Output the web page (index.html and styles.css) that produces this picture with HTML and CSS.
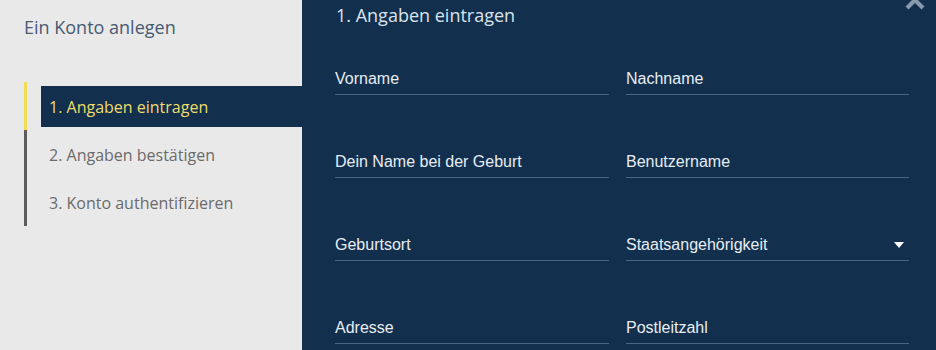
FILE: index.html
```html
<!DOCTYPE html>
<html lang="de">
<head>
<meta charset="UTF-8">
<title>Ein Konto anlegen</title>
<link rel="stylesheet" href="styles.css">
</head>
<body>
<div class="page">
  <aside class="sidebar">
    <h2 class="sidebar-title">Ein Konto anlegen</h2>
    <ul class="steps">
      <li class="step active"><span>1. Angaben eintragen</span></li>
      <li class="step"><span>2. Angaben bestätigen</span></li>
      <li class="step"><span>3. Konto authentifizieren</span></li>
    </ul>
  </aside>
  <main class="content">
    <button class="close" aria-label="Schließen">
      <svg width="24" height="24" viewBox="0 0 24 24"><path d="M4 4 L20 20 M20 4 L4 20" stroke="#8799ad" stroke-width="4.2" fill="none"/></svg>
    </button>
    <h1 class="content-title">1. Angaben eintragen</h1>
    <div class="fields">
      <div class="field"><span>Vorname</span></div>
      <div class="field"><span>Nachname</span></div>
      <div class="field"><span>Dein Name bei der Geburt</span></div>
      <div class="field"><span>Benutzername</span></div>
      <div class="field"><span>Geburtsort</span></div>
      <div class="field select"><span>Staatsangehörigkeit</span><i class="caret"></i></div>
      <div class="field"><span>Adresse</span></div>
      <div class="field"><span>Postleitzahl</span></div>
    </div>
  </main>
</div>
</body>
</html>
```

FILE: styles.css
```css
body {
    margin: 0;
    background-color: #12304e;
    font-family: 'Open Sans', sans-serif;
}
.page {
    display: flex;
    height: 350px;
    overflow: hidden;
}
.sidebar {
    width: 302px;
    flex: none;
    background-color: #e9e9e9;
    padding-left: 24px;
    box-sizing: border-box;
}
.sidebar-title {
    margin: 15px 0 0;
    font-size: 18px;
    font-weight: 400;
    line-height: 24px;
    color: #475a72;
}
.steps {
    list-style: none;
    margin: 43px 0 0;
    padding: 0;
}
.step {
    border-left: 3px solid #5c5c5c;
    padding: 4px 0 3px 14px;
}
.step span {
    display: flex;
    align-items: center;
    height: 41px;
    padding-left: 8px;
    font-size: 16px;
    color: #6b6b6b;
}
.step.active {
    border-left-color: #f2dc50;
}
.step.active span {
    background-color: #12304e;
    color: #f0dc6a;
}
.content {
    flex: 1;
    position: relative;
    padding: 3px 27px 0 33px;
}
.close {
    position: absolute;
    top: -12px;
    right: 9px;
    padding: 0;
    border: none;
    background: none;
    width: 24px;
    height: 24px;
}
.content-title {
    margin: 0 0 0 1px;
    font-size: 18px;
    font-weight: 400;
    line-height: 24px;
    color: #dbe3ec;
}
.fields {
    display: grid;
    grid-template-columns: 274px 283px;
    column-gap: 17px;
    row-gap: 57px;
    margin-top: 42px;
}
.field {
    display: flex;
    align-items: center;
    justify-content: space-between;
    height: 20px;
    padding-bottom: 5px;
    border-bottom: 1px solid #4c6681;
    font-family: 'Liberation Sans', Arial, sans-serif;
    font-size: 16px;
    color: #e8edf3;
}
.caret {
    width: 0;
    height: 0;
    margin-right: 5px;
    border-left: 5px solid transparent;
    border-right: 5px solid transparent;
    border-top: 6px solid #ffffff;
}
```
